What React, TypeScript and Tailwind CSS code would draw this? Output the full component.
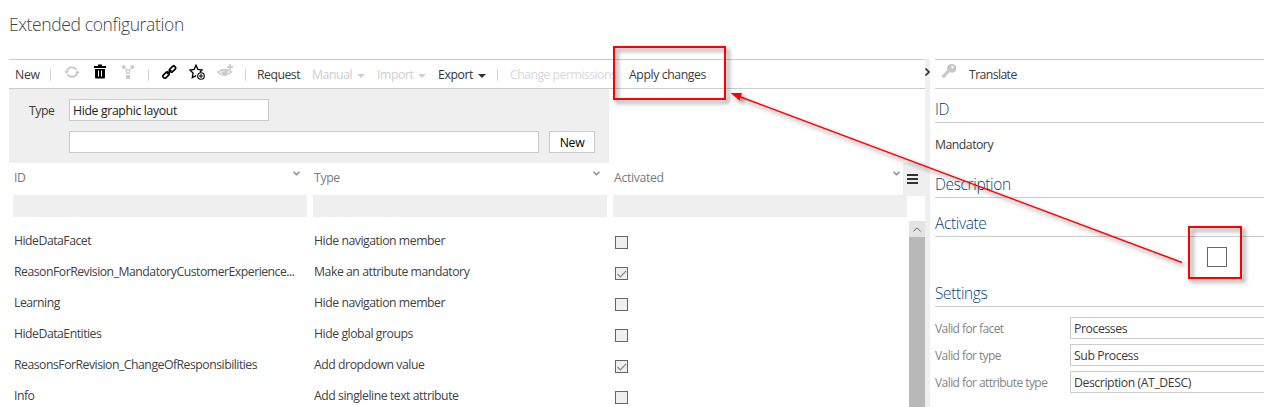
import React from "react";

const line = "border-[#cccccc]";

const rows: [string, string, boolean][] = [
  ["HideDataFacet", "Hide navigation member", false],
  ["ReasonForRevision_MandatoryCustomerExperience...", "Make an attribute mandatory", true],
  ["Learning", "Hide navigation member", false],
  ["HideDataEntities", "Hide global groups", false],
  ["ReasonsForRevision_ChangeOfResponsibilities", "Add dropdown value", true],
  ["Info", "Add singleline text attribute", false],
];

const settings: [string, string][] = [
  ["Valid for facet", "Processes"],
  ["Valid for type", "Sub Process"],
  ["Valid for attribute type", "Description (AT_DESC)"],
];

function Icon({ left, children, color = "text-[#cccccc]" }: { left: string; children: React.ReactNode; color?: string }) {
  return (
    <svg className={`${left} ${color} -mt-[5px] h-4 w-4 shrink-0`} viewBox="0 0 16 16" fill="none" stroke="currentColor">
      {children}
    </svg>
  );
}

function Separator({ left }: { left: string }) {
  return <span className={`${left} mt-px h-3 w-px shrink-0 bg-[#d8d4d4]`} />;
}

function Menu({ label, width, left, color }: { label: string; width: string; left: string; color: string }) {
  return (
    <span className={`${left} ${width} ${color} mt-px flex shrink-0 items-center justify-between whitespace-nowrap`}>
      {label}
      <svg className="mt-0.5 h-1 w-2" viewBox="0 0 8 4" fill="currentColor"><path d="M0 0H8L4 4Z" /></svg>
    </span>
  );
}

function Toolbar() {
  return (
    <div className={`flex h-[30px] shrink-0 items-center border-y ${line} pl-[6px] text-[#3c3c3c]`}>
      <span className="mt-px w-[26px] shrink-0 tracking-[-0.3px]">New</span>
      <Separator left="ml-[9px]" />
      <Icon left="ml-[13px]">
        <path d="M2.6 7.4A5.5 4.8 0 0 1 12.6 5.6M13.4 8.8A5.5 4.8 0 0 1 3.4 10.6" strokeWidth="2" />
        <path d="M.3 7.2H5L2.6 10ZM11 9H15.7L13.4 6.3Z" fill="currentColor" stroke="none" />
      </Icon>
      <Icon left="ml-[12px]" color="text-black">
        <path d="M2 3H14M6 1.5H10" strokeWidth="2" />
        <path d="M3 5V13.5Q3 14.5 4 14.5H12Q13 14.5 13 13.5V5Z" fill="currentColor" stroke="none" />
        <path d="M6.5 6.5V12.5M9.5 6.5V12.5" stroke="white" />
      </Icon>
      <Icon left="ml-[12px]">
        <circle cx="8" cy="7.5" r="1.8" strokeWidth="1.3" />
        <circle cx="3.6" cy="3" r="2" fill="currentColor" stroke="none" />
        <circle cx="12.4" cy="3" r="2" fill="currentColor" stroke="none" />
        <rect x="6" y="11" width="4" height="4" fill="currentColor" stroke="none" />
        <path d="M4 3L7 6.5M12 3L9 6.5" />
      </Icon>
      <Separator left="ml-[12px]" />
      <Icon left="ml-[12px]" color="text-black">
        <rect x="8" y="3.2" width="7" height="3.8" rx="1.9" transform="rotate(-43 11.5 5.1)" strokeWidth="1.7" />
        <rect x="1.5" y="9.2" width="7" height="3.8" rx="1.9" transform="rotate(-43 5 11.1)" strokeWidth="1.7" />
        <path d="M6 10L10.5 6" strokeWidth="1.5" />
      </Icon>
      <Icon left="ml-[12px]" color="text-black">
        <path d="M7.2 11.6L3.3 13.6L4 9L1 6L5.2 5.3L7 1.2L8.9 5.3L13 6L11 8.2" strokeWidth="1.3" />
        <circle cx="12" cy="12" r="3.3" strokeWidth="1.1" />
        <path d="M12 10V14M10 12H14" />
      </Icon>
      <Icon left="ml-[12px]">
        <path d="M.8 8Q7.5 2.5 14.5 8Q7.5 14.5 .8 8Z" strokeWidth="1.5" />
        <circle cx="7.7" cy="8" r="3.2" fill="currentColor" stroke="none" />
        <path d="M6.2 7.5Q6.4 6.3 7.7 6.2" stroke="white" />
        <path d="M13.2 0V6M10.2 3H16" strokeWidth="1.8" />
      </Icon>
      <Separator left="ml-[12px]" />
      <span className="ml-[11px] mt-px w-[43px] shrink-0 tracking-[-0.5px]">Request</span>
      <Menu label="Manual" width="w-[53px]" left="ml-[12px]" color="text-[#cecece]" />
      <Menu label="Import" width="w-[49px]" left="ml-[12px]" color="text-[#cecece]" />
      <Menu label="Export" width="w-[48px]" left="ml-[12px]" color="text-[#333333]" />
      <Separator left="ml-[11px]" />
      <span className="ml-[12px] mt-px w-[104px] shrink-0 whitespace-nowrap tracking-[-0.52px] text-[#d8d8d8]">Change permissions</span>
      <span className="ml-[15px] mt-px shrink-0 tracking-[-0.4px]">Apply changes</span>
    </div>
  );
}

function Filters() {
  return (
    <div className="h-[74px] w-[600px] shrink-0 bg-[#efefef] pt-[10px]">
      <div className="flex h-[22px] items-center">
        <span className="w-[60px] pl-5 pt-[2px] tracking-[-0.5px]">Type</span>
        <span className={`flex h-[22px] w-[200px] items-center border ${line} bg-white pl-[3px] pt-px tracking-[-0.35px] text-[#1c1c1c]`}>Hide graphic layout</span>
      </div>
      <div className="mt-[10px] flex h-[22px] pl-[60px]">
        <span className={`w-[470px] border ${line} bg-white`} />
        <span className={`ml-[10px] flex w-[46px] items-center justify-center border ${line} bg-white pt-px tracking-[-0.3px] text-black`}>New</span>
      </div>
    </div>
  );
}

function Grid() {
  return (
    <div className="flex min-h-0 flex-1">
      <div className="w-[894px] shrink-0">
        <div className="flex h-8">
          {["ID", "Type", "Activated"].map((h) => (
            <div key={h} className="flex w-[300px] shrink-0 justify-between pl-[5px] pr-[9px] text-[#7b7b7b]">
              <span className="pt-[6px] tracking-[-0.35px]">{h}</span>
              <svg className="mt-2 h-[5px] w-[7px] shrink-0" viewBox="0 0 7 5" fill="none" stroke="#888" strokeWidth="1.4"><path d="M.5 .7L3.5 3.7L6.5 .7" /></svg>
            </div>
          ))}
        </div>
        <div className="flex gap-[6px] pl-1">
          <div className="h-[22px] w-[294px] shrink-0 bg-[#efefef]" />
          <div className="h-[22px] w-[294px] shrink-0 bg-[#efefef]" />
          <div className="h-[22px] w-[294px] shrink-0 bg-[#efefef]" />
        </div>
        <div className="pt-[8px]">
          {rows.map(([id, type, on]) => (
            <div key={id} className="flex h-[31px] items-center pl-[5px] whitespace-nowrap text-[#424242]">
              <span className="w-[300px] tracking-[-0.5px]">{id}</span>
              <span className="w-[301px] tracking-[-0.46px]">{type}</span>
              <span className="mt-[4px] flex h-[13px] w-[13px] border border-[#666] bg-[#efefef]">
                {on && <svg viewBox="0 0 11 11" fill="none" stroke="#858585" strokeWidth="1.2"><path d="M1.5 6L4.3 8.8L10 3" /></svg>}
              </span>
            </div>
          ))}
        </div>
      </div>
      <div className="flex flex-1 flex-col items-end">
        <div className="flex h-[33px] w-[22px] shrink-0 flex-col gap-[2px] bg-[#efefef] pl-1 pt-[11px]">
          <span className="h-[2px] w-[11px] bg-[#333]" />
          <span className="h-[2px] w-[11px] bg-[#333]" />
          <span className="h-[2px] w-[11px] bg-[#333]" />
        </div>
        <div className="mt-[25px] flex h-4 w-4 shrink-0 items-center justify-center bg-[#e3e3e3]">
          <svg className="h-[5px] w-2" viewBox="0 0 8 5" fill="none" stroke="#666"><path d="M.3 4.5L4 .8L7.7 4.5" /></svg>
        </div>
        <div className="w-4 flex-1 bg-[#b8b8b8]" />
      </div>
    </div>
  );
}

function Heading({ children, box }: { children: string; box: string }) {
  return <h2 className={`${box} flex items-end border-b ${line} pb-px text-[15.5px] leading-6 font-light tracking-[-0.36px] text-[#0d3f73]`}>{children}</h2>;
}

function Details() {
  return (
    <aside className="ml-[5px] w-[329px] shrink-0">
      <div className={`flex h-[30px] items-center border-y ${line} text-[#3c3c3c]`}>
        <svg className="-mt-[6px] ml-[7px] h-[14px] w-[14px]" viewBox="0 0 14 14" fill="#c8c8c8">
          <path fillRule="evenodd" d="M9.4 0A4.4 4.4 0 1 1 8 8.3L7 9.3L5.8 9.5L5.7 10.8L4.5 11L4.3 12.2L2.6 13.7H0V11.5L5.3 6.1A4.4 4.4 0 0 1 9.4 0ZM10.5 2A1.2 1.2 0 1 0 10.5 4.4A1.2 1.2 0 0 0 10.5 2Z" />
        </svg>
        <span className="ml-[13px] mt-px tracking-[-0.6px]">Translate</span>
      </div>
      <Heading box="h-[34px]">ID</Heading>
      <div className="flex h-[42px] items-center pt-px tracking-[-0.5px] text-[#3c3c3c]">Mandatory</div>
      <Heading box="h-[33px]">Description</Heading>
      <Heading box="h-[39px]">Activate</Heading>
      <div className="h-[37px] pl-[272px] pt-[10px]">
        <span className="block h-5 w-5 border border-[#666] bg-white" />
      </div>
      <Heading box="h-[33px]">Settings</Heading>
      <div className="flex flex-col gap-[5px] pt-[10px]">
        {settings.map(([label, value]) => (
          <div key={label} className="flex h-[22px] items-center whitespace-nowrap">
            <span className="w-[135px] shrink-0 pt-[2px] text-[12px] tracking-[-0.57px] text-[#858585]">{label}</span>
            <span className={`flex h-[22px] flex-1 items-center border-y border-l ${line} pl-[3px] pt-px text-[#3c3c3c]`}>{value}</span>
          </div>
        ))}
      </div>
    </aside>
  );
}

export default function App() {
  return (
    <div className="relative flex h-[407px] w-[1264px] flex-col overflow-hidden bg-white font-['Open_Sans','Noto_Sans',sans-serif] text-[12.25px] leading-[18px] tracking-[-0.42px] text-[#3c3c3c]">
      <h1 className="h-[59px] shrink-0 pl-[9px] pt-3 text-[17.5px] leading-6 font-light tracking-[-0.38px] text-[#444]">Extended configuration</h1>
      <div className="flex h-[348px] shrink-0 pl-[9px]">
        <main className="flex w-[916px] shrink-0 flex-col">
          <Toolbar />
          <Filters />
          <Grid />
        </main>
        <div className="w-[5px] shrink-0 bg-[#efefef] pt-[9px]">
          <svg className="h-2 w-[5px]" viewBox="0 0 5 8" fill="none" stroke="#333" strokeWidth="1.6"><path d="M.5 .5L4 4L.5 7.5" /></svg>
        </div>
        <Details />
      </div>
      <svg className="pointer-events-none absolute inset-0 h-[407px] w-[1264px] drop-shadow-[3px_3px_2px_rgba(0,0,0,0.5)]" viewBox="0 0 1264 407" fill="none" stroke="#ff0000">
        <rect x="614" y="47" width="111" height="52" strokeWidth="2" />
        <rect x="1189" y="227" width="52" height="51" strokeWidth="2" />
        <path d="M738 96L1182 262.5" strokeWidth="1.5" />
        <path d="M730.5 93L742 93L739.5 100.5Z" fill="#ff0000" stroke="none" />
      </svg>
    </div>
  );
}
